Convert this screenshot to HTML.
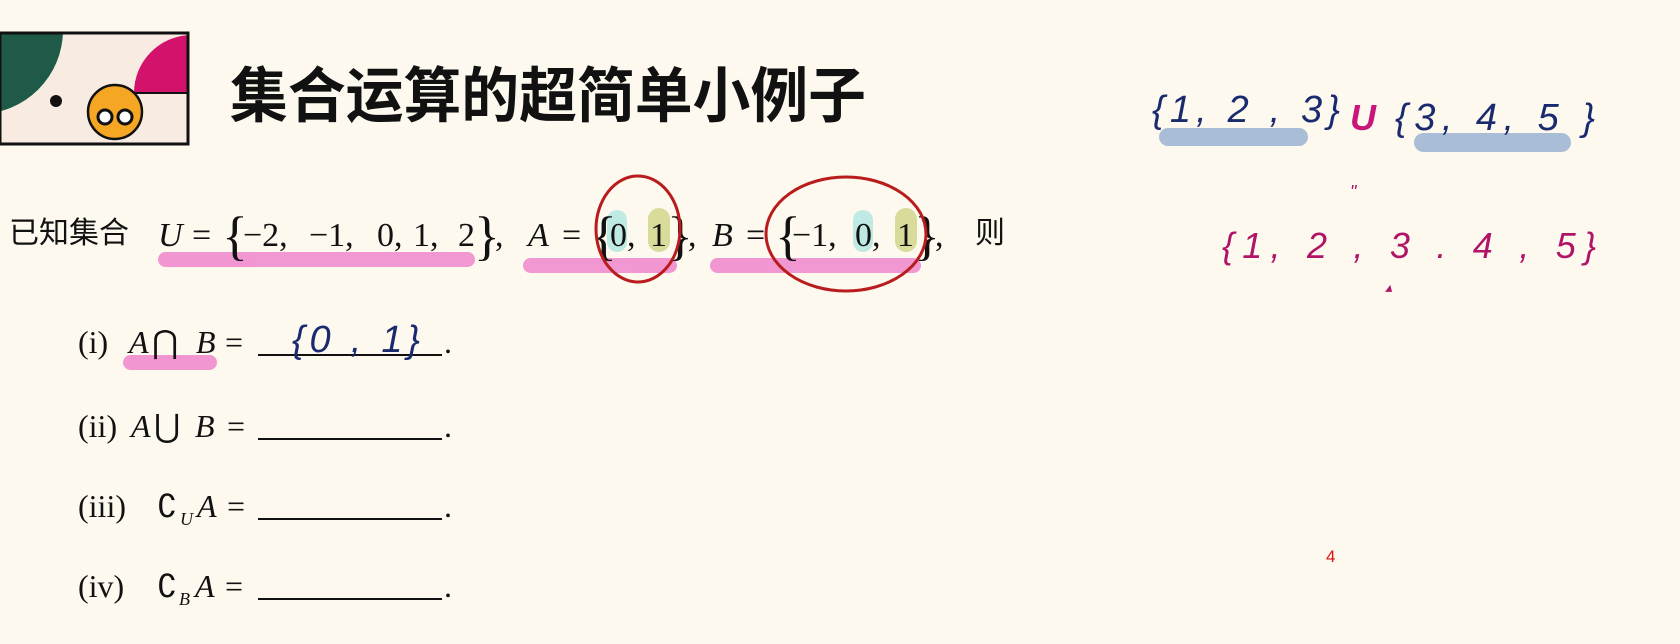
<!DOCTYPE html>
<html><head><meta charset="utf-8"><style>
html,body{margin:0;padding:0;background:#fdf9ef;}
svg{display:block}
.s{font-family:"Liberation Serif","Noto Serif CJK SC",serif;}
.cj{font-family:"Liberation Serif","Noto Sans CJK SC",sans-serif;}
.hw{font-family:"Liberation Sans",sans-serif;font-style:italic;}
</style></head><body>
<svg width="1680" height="644" viewBox="0 0 1680 644" xmlns="http://www.w3.org/2000/svg">
<rect width="1680" height="644" fill="#fdf9ef"/>
<!-- logo -->
<defs><clipPath id="c"><rect x="0" y="33" width="188" height="111"/></clipPath>
<clipPath id="p"><rect x="0" y="33" width="188" height="60"/></clipPath></defs>
<rect x="0" y="33" width="188" height="111" fill="#f8ebe2"/>
<g clip-path="url(#c)">
<circle cx="-21" cy="30" r="84" fill="#1f5a48"/>
<g clip-path="url(#p)"><circle cx="192" cy="93" r="58" fill="#d2126b"/></g>
<line x1="134" y1="93" x2="188" y2="93" stroke="#111" stroke-width="2"/>
</g>
<circle cx="56" cy="101" r="6" fill="#111"/>
<circle cx="115" cy="112" r="27" fill="#f5a623" stroke="#111" stroke-width="2.5"/>
<circle cx="105" cy="117" r="7" fill="#fff" stroke="#111" stroke-width="3"/>
<circle cx="125" cy="117" r="7" fill="#fff" stroke="#111" stroke-width="3"/>
<rect x="0" y="33" width="188" height="111" fill="none" stroke="#111" stroke-width="3"/>
<!-- title -->
<text x="230" y="117" class="cj" font-size="60" font-weight="bold" textLength="636" lengthAdjust="spacingAndGlyphs" fill="#111">集合运算的超简单小例子</text>
<!-- highlights -->
<g fill="#f08ccd" opacity="0.9">
<rect x="158" y="252" width="317" height="15" rx="7.5"/>
<rect x="523" y="258" width="154" height="15" rx="7.5"/>
<rect x="710" y="258" width="211" height="15" rx="7.5"/>
<rect x="123" y="355" width="94" height="15" rx="7.5"/>
</g>
<rect x="607" y="210" width="20" height="42" rx="10" fill="#bfeae4"/>
<rect x="648" y="208" width="22" height="44" rx="11" fill="#d8db9a"/>
<rect x="853" y="210" width="20" height="42" rx="10" fill="#bfeae4"/>
<rect x="895" y="208" width="22" height="44" rx="11" fill="#d8db9a"/>
<!-- line 1 -->
<text x="9" y="243" class="cj" font-size="30" fill="#111">已知集合</text>
<g class="s" font-size="34" fill="#111">
<text x="158" y="246" font-style="italic">U</text><text x="192" y="246">=</text>
<text x="222" y="254" font-size="54">{</text>
<text x="243" y="246">−2,</text><text x="309" y="246">−1,</text><text x="377" y="246">0,</text><text x="413" y="246">1,</text><text x="458" y="246">2</text>
<text x="474" y="254" font-size="54">}</text><text x="495" y="246">,</text>
<text x="528" y="246" font-style="italic">A</text><text x="562" y="246">=</text>
<text x="591" y="254" font-size="54">{</text><text x="610" y="246">0,</text><text x="650" y="246">1</text>
<text x="667" y="254" font-size="54">}</text><text x="688" y="246">,</text>
<text x="712" y="246" font-style="italic">B</text><text x="746" y="246">=</text>
<text x="775" y="254" font-size="54">{</text><text x="792" y="246">−1,</text><text x="855" y="246">0,</text><text x="897" y="246">1</text>
<text x="914" y="254" font-size="54">}</text><text x="935" y="246">,</text>
</g>
<text x="975" y="243" class="cj" font-size="30" fill="#111">则</text>
<ellipse cx="638" cy="229" rx="42" ry="53" fill="none" stroke="#b81c1c" stroke-width="3"/>
<ellipse cx="846" cy="234" rx="80" ry="57" fill="none" stroke="#b81c1c" stroke-width="3"/>
<!-- items -->
<g class="s" font-size="32" fill="#111">
<text x="78" y="353">(i)</text><text x="129" y="353" font-style="italic">A</text><text x="152" y="353">⋂</text><text x="196" y="353" font-style="italic">B</text><text x="225" y="353">=</text>
<text x="78" y="437">(ii)</text><text x="131" y="437" font-style="italic">A</text><text x="154" y="437">⋃</text><text x="195" y="437" font-style="italic">B</text><text x="227" y="437">=</text>
<text x="78" y="517">(iii)</text><text x="157" y="517">∁</text><text x="180" y="525" font-style="italic" font-size="18">U</text><text x="197" y="517" font-style="italic">A</text><text x="227" y="517">=</text>
<text x="78" y="597">(iv)</text><text x="157" y="597">∁</text><text x="179" y="605" font-style="italic" font-size="18">B</text><text x="195" y="597" font-style="italic">A</text><text x="225" y="597">=</text>
<text x="444" y="353">.</text><text x="444" y="437">.</text><text x="444" y="517">.</text><text x="444" y="597">.</text>
</g>
<g stroke="#111" stroke-width="2">
<line x1="258" y1="355" x2="442" y2="355"/><line x1="258" y1="439" x2="442" y2="439"/>
<line x1="258" y1="519" x2="442" y2="519"/><line x1="258" y1="599" x2="442" y2="599"/>
</g>
<text x="292" y="352" class="hw" font-size="38" fill="#1a2a6e" textLength="128" lengthAdjust="spacing">{0 , 1}</text>
<!-- right side handwriting -->
<rect x="1159" y="128" width="149" height="18" rx="9" fill="#a9bed6"/>
<rect x="1414" y="133" width="157" height="19" rx="9.5" fill="#a9bed6"/>
<text x="1152" y="122" class="hw" font-size="38" fill="#1a2a6e" textLength="188" lengthAdjust="spacing">{1, 2 , 3}</text>
<text x="1350" y="130" class="hw" font-size="36" font-weight="bold" fill="#c8167a">U</text>
<text x="1395" y="130" class="hw" font-size="38" fill="#1a2a6e" textLength="200" lengthAdjust="spacing">{3, 4, 5 }</text>
<text x="1350" y="198" class="hw" font-size="18" fill="#b01466">"</text>
<text x="1222" y="258" class="hw" font-size="36" fill="#b01466" textLength="374" lengthAdjust="spacing">{1,  2 , 3 . 4 , 5}</text>
<text x="1385" y="292" class="hw" font-size="14" fill="#b01466">▴</text>
<text x="1326" y="562" font-family="Liberation Sans,sans-serif" font-size="17" fill="#e01010">4</text>
</svg>
</body></html>
